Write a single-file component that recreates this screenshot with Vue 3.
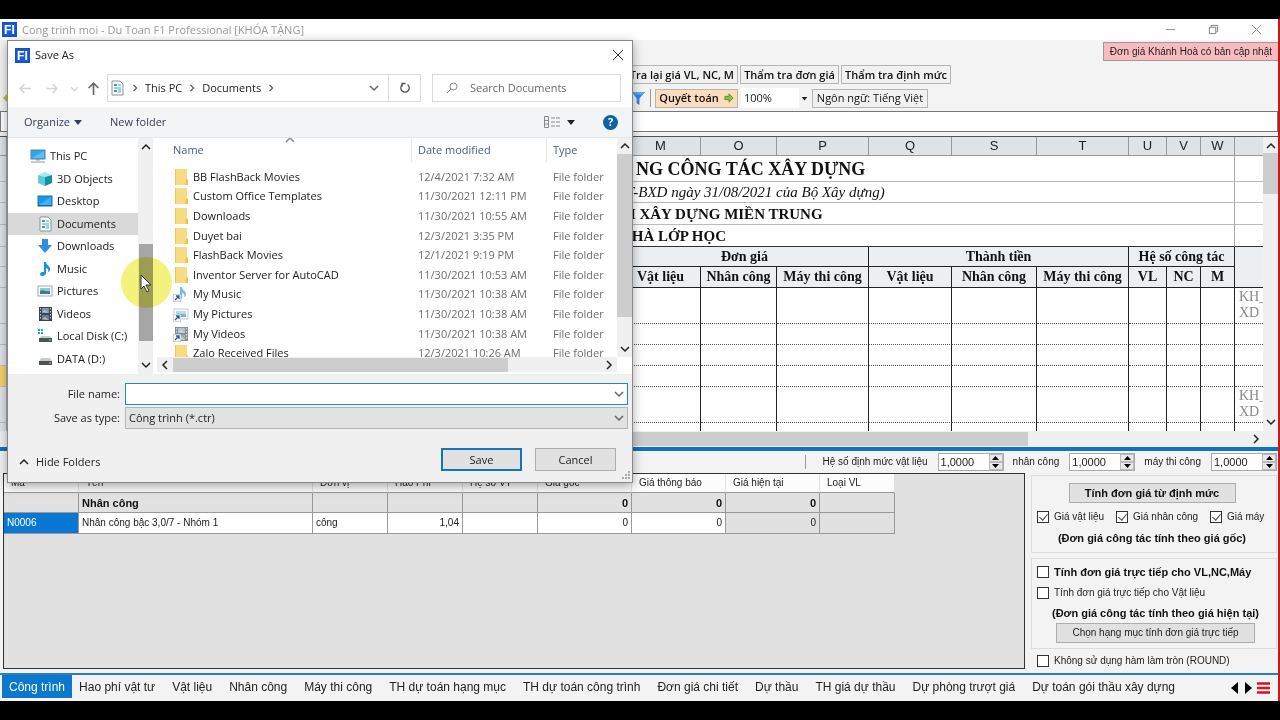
<script setup>
import { ref } from 'vue'

const fileName = ref('')
const zoomLevel = ref('100%')

const columns = ['', 'M', 'O', 'P', 'Q', 'S', 'T', 'U', 'V', 'W', '']
const headings = [
  { text: 'NG CÔNG TÁC XÂY DỰNG', kind: 'title' },
  { text: 'T-BXD ngày 31/08/2021 của Bộ Xây dựng)', kind: 'note' },
  { text: 'H XÂY DỰNG MIỀN TRUNG', kind: 'unit' },
  { text: 'NHÀ LỚP HỌC', kind: 'work' }
]
const subHeads = ['Vật liệu', 'Nhân công', 'Máy thi công', 'Vật liệu', 'Nhân công', 'Máy thi công', 'VL', 'NC', 'M']
const bodyRows = [
  { size: 'tall', code: 'KH_ XD' },
  { size: 'mid', code: '' },
  { size: 'mid', code: '' },
  { size: 'mid', code: '', active: true },
  { size: 'tall', code: 'KH_ XD' },
  { size: 'cut', code: '' }
]

const tree = [
  { name: 'This PC', icon: 'pc', root: true },
  { name: '3D Objects', icon: 'cube' },
  { name: 'Desktop', icon: 'desktop' },
  { name: 'Documents', icon: 'doc', selected: true },
  { name: 'Downloads', icon: 'down' },
  { name: 'Music', icon: 'music' },
  { name: 'Pictures', icon: 'picture' },
  { name: 'Videos', icon: 'video' },
  { name: 'Local Disk (C:)', icon: 'sysdisk' },
  { name: 'DATA (D:)', icon: 'disk' }
]
const files = [
  { name: 'BB FlashBack Movies', date: '12/4/2021 7:32 AM', icon: 'folder' },
  { name: 'Custom Office Templates', date: '11/30/2021 12:11 PM', icon: 'folder' },
  { name: 'Downloads', date: '11/30/2021 10:55 AM', icon: 'folder' },
  { name: 'Duyet bai', date: '12/3/2021 3:35 PM', icon: 'folder' },
  { name: 'FlashBack Movies', date: '12/1/2021 9:19 PM', icon: 'folder' },
  { name: 'Inventor Server for AutoCAD', date: '11/30/2021 10:53 AM', icon: 'folder' },
  { name: 'My Music', date: '11/30/2021 10:38 AM', icon: 'music', link: true },
  { name: 'My Pictures', date: '11/30/2021 10:38 AM', icon: 'picture', link: true },
  { name: 'My Videos', date: '11/30/2021 10:38 AM', icon: 'video', link: true },
  { name: 'Zalo Received Files', date: '12/3/2021 10:26 AM', icon: 'folder' }
]

const factors = [
  { id: 'f-vl', label: 'Hệ số định mức vật liệu' },
  { id: 'f-nc', label: 'nhân công' },
  { id: 'f-m', label: 'máy thi công' }
]
const costHeads = ['Mã', 'Tên', 'Đơn vị', 'Hao Phí', 'Hệ số VT', 'Giá gốc', 'Giá thông báo', 'Giá hiện tại', 'Loại VL']
const tabs = ['Công trình', 'Hao phí vật tư', 'Vật liệu', 'Nhân công', 'Máy thi công', 'TH dự toán hạng mục', 'TH dự toán công trình', 'Đơn giá chi tiết', 'Dự thầu', 'TH giá dự thầu', 'Dự phòng trượt giá', 'Dự toán gói thầu xây dựng']
</script>

<template>
  <div class="screen">
    <svg class="defs" width="0" height="0" aria-hidden="true">
      <defs>
        <symbol id="logo" viewBox="0 0 16 16"><rect width="16" height="16" fill="#1a5fe0" /><rect x="1" y="1" width="14" height="14" fill="none" stroke="#0d48b8" stroke-width="1" /><text x="8" y="13" font-size="13" font-weight="700" font-family="Liberation Sans, sans-serif" fill="#fff" text-anchor="middle">FI</text></symbol>
        <symbol id="pc" viewBox="0 0 16 16"><rect x="1" y="2" width="14" height="9" fill="#31a5ea" stroke="#4c86ad" /><path d="M2 10L14 3v7z" fill="#5cc0f5" /><path d="M6 11h4v1.500H6z" fill="#8fa6b5" /><path d="M1 14h14" stroke="#8a9aa6" /></symbol>
        <symbol id="cube" viewBox="0 0 16 16"><path d="M1 4L8 1l7 3-7 2z" fill="#a5e9ee" /><path d="M1 4l7 2v9l-7-3z" fill="#5fcbd8" /><path d="M8 6l7-2v8l-7 3z" fill="#168fa6" /></symbol>
        <symbol id="desktop" viewBox="0 0 16 16"><rect x="1" y="3" width="14" height="10" fill="#159bea" stroke="#2a6ea3" /><path d="M2 12L14 4v8z" fill="#3db2f4" /><path d="M1 12.500h14" stroke="#1b628f" /></symbol>
        <symbol id="doc" viewBox="0 0 16 16"><path d="M3 1h8l3 3v11H3z" fill="#f6fafb" stroke="#8b9499" /><path d="M5 4h3v2H5zM5 10h3v2H5z" fill="#3c9db0" /><path d="M9 5h3M5 8h7M9 10h3M9 12h3" stroke="#50aabb" /></symbol>
        <symbol id="down" viewBox="0 0 16 16"><path d="M5 1h6v6h4l-7 8-7-8h4z" fill="#2e8fdc" /></symbol>
        <symbol id="music" viewBox="0 0 16 16"><path d="M7 1h2c0 3 4 4 4 7 0 2-1 3-2 3 1-3-1-4-2-4v5c0 2-2 3-4 3s-3-3 0-4h2z" fill="#1b93d3" /></symbol>
        <symbol id="picture" viewBox="0 0 16 16"><rect x="1" y="3" width="14" height="10" fill="#fff" stroke="#9daab2" /><rect x="3" y="5" width="10" height="6" fill="#8cc7e6" /><path d="M3 8c3-2 5 1 10 0v3H3z" fill="#3f7b80" /></symbol>
        <symbol id="video" viewBox="0 0 16 16"><rect x="2" y="1" width="13" height="14" fill="#3f4347" /><path d="M3.500 2v12M13.500 2v12" stroke="#c5c8ca" stroke-dasharray="1.500 1.500" /><rect x="5" y="2" width="7" height="5" fill="#6d9bd0" /><rect x="5" y="9" width="7" height="5" fill="#587ebb" /><path d="M5 6l3-2 4 3zM5 13l3-2 4 3z" fill="#d2bd70" /></symbol>
        <symbol id="sysdisk" viewBox="0 0 16 16"><path d="M1 1h2v2H1zM4 1h2v2H4zM1 4h2v2H1zM4 4h2v2H4z" fill="#19a7df" /><path d="M4 8h9l2 3H2z" fill="#c9cccd" /><rect x="2" y="10" width="13" height="4" fill="#4c5356" /><path d="M12 12h2" stroke="#84e58b" /></symbol>
        <symbol id="disk" viewBox="0 0 16 16"><path d="M4 7h9l2 3H2z" fill="#c9cccd" /><rect x="2" y="10" width="13" height="4" fill="#4c5356" /><path d="M12 12h2" stroke="#c5cbc6" /></symbol>
        <symbol id="folder" viewBox="0 0 16 16"><path d="M2 0h12v10l1 1v5H2z" fill="#f8dc84" /><path d="M2 0h1v16H2z" fill="#eec75c" /><path d="M13 10l2 1v5h-3z" fill="#eec351" /></symbol>
        <symbol id="chev-down" viewBox="0 0 10 10"><path d="M1 3l4 4 4-4" fill="none" stroke="currentColor" stroke-width="1.500" /></symbol>
        <symbol id="chev-up" viewBox="0 0 10 10"><path d="M1 7l4-4 4 4" fill="none" stroke="currentColor" stroke-width="1.500" /></symbol>
        <symbol id="chev-left" viewBox="0 0 10 10"><path d="M7 1L3 5l4 4" fill="none" stroke="currentColor" stroke-width="1.500" /></symbol>
        <symbol id="chev-right" viewBox="0 0 10 10"><path d="M3 1l4 4-4 4" fill="none" stroke="currentColor" stroke-width="1.500" /></symbol>
        <symbol id="tri" viewBox="0 0 10 10"><path d="M1 3h8L5 8z" fill="currentColor" /></symbol>
      </defs>
    </svg>

    <div class="app">
      <header class="titlebar">
        <svg class="logo"><use href="#logo" /></svg>
        <span class="app-name">Cong trinh moi - Du Toan F1 Professional [KHÓA TẶNG]</span>
        <div class="win-buttons">
          <button aria-label="Minimize"><svg viewBox="0 0 12 12"><path d="M1 6h10" stroke="#8a8a8a" /></svg></button>
          <button aria-label="Restore"><svg viewBox="0 0 12 12"><path d="M1.500 3.500h7v7h-7zM3.500 3V1.500h7v7H9" fill="none" stroke="#777" /></svg></button>
          <button aria-label="Close"><svg viewBox="0 0 12 12"><path d="M1 1l10 10M11 1L1 11" stroke="#8a8a8a" /></svg></button>
        </div>
      </header>

      <section class="tools">
        <div class="alert-row"><a class="alert" href="#">Đơn giá Khánh Hoà có bản cập nhật</a></div>
        <div class="tool-row">
          <button class="tool bold under">Tra lại giá VL, NC, M</button>
          <button class="tool bold w99">Thẩm tra đơn giá</button>
          <button class="tool bold w110">Thẩm tra định mức</button>
        </div>
        <div class="tool-row second">
          <svg class="back-mark" viewBox="0 0 6 12"><path d="M6 1L1 6l5 5z" fill="#b9c52f" /></svg>
          <svg class="filter" viewBox="0 0 16 16"><path d="M1 1h14L9 8v7l-3-2V8z" fill="#2f86e6" /><path d="M1 1h14l-3 3H5z" fill="#62a9f2" /></svg>
          <span class="sep"></span>
          <button class="tool bold warm">Quyết toán <svg viewBox="0 0 12 12"><path d="M1 4h5V1l5 5-5 5V8H1z" fill="#86c440" stroke="#4f8c24" /></svg></button>
          <div class="zoom">
            <select v-model="zoomLevel" aria-label="Zoom"><option>100%</option></select>
            <svg class="tiny"><use href="#tri" /></svg>
          </div>
          <button class="tool w116">Ngôn ngữ: Tiếng Việt</button>
        </div>
      </section>
      <input class="formula" type="text" aria-label="Formula" />

      <section class="sheet-wrap">
        <div class="sheet">
          <table>
            <colgroup>
              <col class="c-num" /><col class="c-left" /><col class="c-m" /><col class="c-o" /><col class="c-p" /><col class="c-q" />
              <col class="c-s" /><col class="c-p" /><col class="c-u" /><col class="c-v" /><col class="c-w" /><col />
            </colgroup>
            <thead>
              <tr class="letters"><th></th><th v-for="(c, i) in columns" :key="i">{{ c }}</th></tr>
            </thead>
            <tbody>
              <tr v-for="h in headings" :key="h.kind" class="heading" :class="h.kind">
                <th></th><td></td><td colspan="9">{{ h.text }}</td><td></td>
              </tr>
              <tr class="group"><th></th><td></td><td colspan="3">Đơn giá</td><td colspan="3">Thành tiền</td><td colspan="3">Hệ số công tác</td><td rowspan="2"></td></tr>
              <tr class="group sub"><th></th><td></td><td v-for="(s, i) in subHeads" :key="i">{{ s }}</td></tr>
              <tr v-for="(r, i) in bodyRows" :key="i" class="line" :class="r.size">
                <th :class="{ active: r.active }"></th><td v-for="n in 10" :key="n"></td><td class="code">{{ r.code }}</td>
              </tr>
            </tbody>
          </table>
        </div>
        <div class="vbar">
          <svg class="tiny"><use href="#chev-up" /></svg>
          <span class="thumb"></span>
          <svg class="tiny end"><use href="#chev-down" /></svg>
        </div>
      </section>
      <div class="hbar">
        <svg class="tiny"><use href="#chev-left" /></svg><span class="thumb"></span><svg class="tiny end"><use href="#chev-right" /></svg>
      </div>

      <div class="factors">
        <span class="sep"></span>
        <div v-for="f in factors" :key="f.id" class="factor">
          <label :for="f.id">{{ f.label }}</label>
          <div class="spin">
            <input :id="f.id" type="text" value="1,0000" />
            <div class="steps">
              <button aria-label="Increase"><svg viewBox="0 0 7 4"><path d="M0 4h7L3.500 0z" /></svg></button>
              <button aria-label="Decrease"><svg viewBox="0 0 7 4"><path d="M0 0h7L3.500 4z" /></svg></button>
            </div>
          </div>
        </div>
      </div>

      <section class="lower">
        <div class="costs">
          <table>
            <colgroup><col class="k-75" /><col class="k-name" /><col class="k-75" /><col class="k-75" /><col class="k-75" /><col class="k-94" /><col class="k-94" /><col class="k-94" /><col class="k-75" /></colgroup>
            <thead><tr><th v-for="h in costHeads" :key="h">{{ h }}</th></tr></thead>
            <tbody>
              <tr class="total"><td></td><td>Nhân công</td><td></td><td></td><td></td><td class="num">0</td><td class="num">0</td><td class="num">0</td><td></td></tr>
              <tr><td class="picked">N0006</td><td>Nhân công bậc 3,0/7 - Nhóm 1</td><td>công</td><td class="num">1,04</td><td></td><td class="num">0</td><td class="num">0</td><td class="num dim">0</td><td class="dim"></td></tr>
            </tbody>
          </table>
        </div>
        <aside class="side">
          <div class="box first">
            <button class="push strong">Tính đơn giá từ định mức</button>
            <div class="checks">
              <label><input type="checkbox" checked /> Giá vật liệu</label>
              <label><input type="checkbox" checked /> Giá nhân công</label>
              <label><input type="checkbox" checked /> Giá máy</label>
            </div>
            <p>(Đơn giá công tác tính theo giá gốc)</p>
          </div>
          <div class="box direct">
            <label class="strong"><input type="checkbox" /> Tính đơn giá trực tiếp cho VL,NC,Máy</label>
            <label><input type="checkbox" /> Tính đơn giá trực tiếp cho Vật liệu</label>
            <p>(Đơn giá công tác tính theo giá hiện tại)</p>
            <button class="push wide">Chọn hạng mục tính đơn giá trực tiếp</button>
          </div>
          <label class="round"><input type="checkbox" /> Không sử dụng hàm làm tròn (ROUND)</label>
        </aside>
      </section>

      <nav class="tabs">
        <button v-for="(t, i) in tabs" :key="t" :class="{ on: i === 0 }">{{ t }}</button>
        <div class="tab-tools">
          <button aria-label="Previous"><svg viewBox="0 0 8 12"><path d="M7 0v12L0 6z" /></svg></button>
          <button aria-label="Next"><svg viewBox="0 0 8 12"><path d="M1 0v12l7-6z" /></svg></button>
          <button aria-label="Menu"><svg class="menu" viewBox="0 0 13 12"><path d="M0 1.500h13M0 6h13M0 10.500h13" stroke="#d2161b" stroke-width="2.500" /></svg></button>
        </div>
      </nav>
    </div>

    <div class="dialog" role="dialog" aria-label="Save As">
      <div class="d-title">
        <svg class="logo"><use href="#logo" /></svg><span>Save As</span>
        <button aria-label="Close"><svg viewBox="0 0 12 12"><path d="M1 1l10 10M11 1L1 11" stroke="#333" /></svg></button>
      </div>
      <div class="d-nav">
        <div class="arrows">
          <button aria-label="Back"><svg viewBox="0 0 12 12"><path d="M11 6H1M5 2L1 6l4 4" fill="none" stroke="#d5d5d5" stroke-width="1.500" /></svg></button>
          <button aria-label="Forward"><svg viewBox="0 0 12 12"><path d="M1 6h10M7 2l4 4-4 4" fill="none" stroke="#d5d5d5" stroke-width="1.500" /></svg></button>
          <button class="pale" aria-label="Recent"><svg viewBox="0 0 12 12"><path d="M3 5l3 3 3-3" fill="none" stroke="#ccc" /></svg></button>
          <button aria-label="Up"><svg viewBox="0 0 12 12"><path d="M6 12V1M1.500 5.500L6 1l4.500 4.500" fill="none" stroke="#666" stroke-width="1.500" /></svg></button>
        </div>
        <div class="address">
          <svg class="i16"><use href="#doc" /></svg>
          <svg class="tiny"><use href="#chev-right" /></svg><span>This PC</span>
          <svg class="tiny"><use href="#chev-right" /></svg><span>Documents</span>
          <svg class="tiny"><use href="#chev-right" /></svg>
          <button class="more" aria-label="Previous locations"><svg class="tiny"><use href="#chev-down" /></svg></button>
          <button class="refresh" aria-label="Refresh"><svg viewBox="0 0 12 12"><path d="M8.500 2.500a4.200 4.200 0 1 1-5 0" fill="none" stroke="#555" stroke-width="1.300" /><path d="M3 .800v4M2.500 1.500h4" fill="none" stroke="#555" stroke-width="1.300" /></svg></button>
        </div>
        <div class="search">
          <svg viewBox="0 0 12 12"><circle cx="7.500" cy="4.500" r="3.500" fill="none" stroke="#888" /><path d="M5 7L1 11" stroke="#888" /></svg>
          <input type="text" placeholder="Search Documents" aria-label="Search Documents" />
        </div>
      </div>
      <div class="d-tools">
        <button>Organize <svg class="tiny"><use href="#tri" /></svg></button>
        <button>New folder</button>
        <button class="view" aria-label="Change your view">
          <svg class="view-icon" viewBox="0 0 16 12"><path d="M.500.500h4v11h-4zM.500 4.500h4M.500 8h4" fill="none" stroke="#888" /><path d="M7 2h4M12 2h4M7 6h4M12 6h4M7 10h4M12 10h4" stroke="#888" /></svg>
          <svg class="tiny"><use href="#tri" /></svg>
        </button>
        <button class="help" aria-label="Help">?</button>
      </div>
      <div class="d-body">
        <ul class="tree">
          <li v-for="t in tree" :key="t.name" :class="{ root: t.root, selected: t.selected }"><svg class="i16"><use :href="'#' + t.icon" /></svg>{{ t.name }}</li>
        </ul>
        <div class="tree-bar">
          <svg class="tiny"><use href="#chev-up" /></svg><span class="thumb"></span><svg class="tiny end"><use href="#chev-down" /></svg>
        </div>
        <div class="list">
          <div class="list-main">
            <div class="list-view">
              <table>
                <colgroup><col class="l-name" /><col class="l-date" /><col /></colgroup>
                <thead><tr><th>Name <svg class="sort"><use href="#chev-up" /></svg></th><th>Date modified</th><th>Type</th></tr></thead>
              </table>
              <div class="rows">
                <div v-for="f in files" :key="f.name" class="file">
                  <span class="f-name">
                    <span class="f-icon"><svg class="i16" :class="{ faint: f.link }"><use :href="'#' + f.icon" /></svg>
                      <svg v-if="f.link" class="link" viewBox="0 0 8 8"><rect width="8" height="8" fill="#fff" stroke="#aaa" /><path d="M2 6l4-4M3 2h3v3" fill="none" stroke="#1c5fae" stroke-width="1.300" /></svg></span>{{ f.name }}</span>
                  <span>{{ f.date }}</span><span>File folder</span>
                </div>
              </div>
            </div>
            <div class="list-bar"><svg class="tiny"><use href="#chev-up" /></svg><span class="thumb"></span><svg class="tiny end"><use href="#chev-down" /></svg></div>
          </div>
          <div class="list-hbar"><svg class="tiny"><use href="#chev-left" /></svg><span class="thumb"></span><svg class="tiny end"><use href="#chev-right" /></svg></div>
        </div>
      </div>
      <div class="d-form">
        <label for="fname">File name:</label>
        <div class="field"><input id="fname" v-model="fileName" type="text" /><svg class="tiny"><use href="#chev-down" /></svg></div>
        <label for="ftype">Save as type:</label>
        <div class="field"><select id="ftype"><option>Công trình (*.ctr)</option></select><svg class="tiny"><use href="#chev-down" /></svg></div>
      </div>
      <div class="d-foot">
        <button class="hide"><svg class="tiny"><use href="#chev-up" /></svg>Hide Folders</button>
        <button class="act primary">Save</button>
        <button class="act">Cancel</button>
      </div>
      <svg class="grip" viewBox="0 0 9 9"><path d="M7 1h2M4 4h2M7 4h2M1 7h2M4 7h2M7 7h2" stroke="#aaa" stroke-width="2" /></svg>
      <span class="spot"></span>
      <svg class="pointer" viewBox="0 0 12 19"><path d="M1 1v14l3-3 3 6 2-1-3-6h5z" fill="#fff" stroke="#333" /></svg>
    </div>
  </div>
</template>

<style>
body { background: #000; }
</style>

<style scoped>
* { box-sizing: border-box; }
button { border: 0; background: none; padding: 0; font: inherit; color: inherit; }
input, select { font: inherit; color: inherit; border-radius: 0; }
p, ul { margin: 0; padding: 0; list-style: none; }
svg { flex: none; display: block; }
table { border-collapse: separate; border-spacing: 0; table-layout: fixed; width: 100%; }
.defs { position: absolute; }
.tiny { width: 10px; height: 10px; }
.i16 { width: 16px; height: 16px; }
.logo { width: 15px; height: 15px; }

.screen { position: relative; min-height: 100vh; padding: 19px 0; background: #000; display: flex; flex-direction: column; overflow: hidden; }
.app { flex: 1; display: flex; flex-direction: column; background: #f3f3f3; border-right: 2px solid #c9181c; font: 10px/14px "Liberation Sans", Arial, sans-serif; color: #222; }

.titlebar { height: 21px; display: flex; align-items: center; padding-left: 2px; background: #fff; font: 11px/16px "Open Sans", sans-serif; color: #999; }
.app-name { margin-left: 5px; }
.win-buttons { margin-left: auto; display: flex; gap: 32px; padding-right: 16px; }
.win-buttons svg { width: 11px; height: 11px; }

.tools { height: 71px; }
.alert-row { display: flex; justify-content: flex-end; padding-top: 2px; }
.alert { height: 19px; padding: 0 6px; border: 1px solid #999; border-right: 0; background: #f9bcbe; line-height: 17px; color: #222; text-decoration: none; }
.tool-row { display: flex; align-items: center; gap: 2px; padding: 4px 0 0 624px; font: 11px/14px "Open Sans", sans-serif; }
.tool { height: 19px; padding: 0 3px; border: 1px solid #b5b5b5; background: #f1f1f1; color: #111; display: flex; align-items: center; justify-content: center; gap: 5px; white-space: nowrap; }
.tool svg { width: 10px; height: 10px; }
.bold { font-weight: 600; }
.under { width: 114px; justify-content: flex-end; }
.w99 { min-width: 99px; }
.w110 { min-width: 110px; }
.w116 { min-width: 116px; }
.second { position: relative; padding-top: 4px; padding-left: 631px; }
.warm { min-width: 83px; background: #fbdcbd; }
.filter { width: 15px; height: 15px; }
.back-mark { position: absolute; left: 2px; top: 8px; width: 6px; height: 12px; }
.sep { width: 1px; height: 18px; background: #999; margin: 0 2px; }
.zoom { display: flex; align-items: center; width: 68px; height: 20px; margin: 0 1px; position: relative; }
.zoom select { appearance: none; width: 58px; height: 20px; border: 0; background: #fff; padding: 0 3px; }
.zoom svg { width: 7px; height: 7px; position: absolute; right: 1px; }
.formula { width: 100%; height: 21px; border: 1px solid #777; background: #fff; margin-bottom: 4px; display: block; }

.sheet-wrap { display: flex; border-top: 1px solid #555; height: 295px; }
.sheet { flex: 1; min-width: 0; overflow: hidden; background: #fff; }
.c-num { width: 7px; } .c-left { width: 614px; } .c-m { width: 80px; } .c-o { width: 76px; } .c-p { width: 92px; }
.c-q { width: 83px; } .c-s { width: 85px; } .c-u { width: 38px; } .c-v { width: 34px; } .c-w { width: 34px; }
.sheet th, .sheet td { padding: 0; overflow: hidden; white-space: nowrap; border-right: 1px solid #aaa; border-bottom: 1px solid #bbb; }
.sheet th { background: #dfe3e6; font-weight: 400; }
.sheet tr > :last-child { border-right: 0; }
.letters th { height: 19px; font-size: 13px; line-height: 18px; border-color: #999; }
.heading td { height: 22px; font-family: "Liberation Serif", "Times New Roman", serif; color: #111; }
.heading.title td { height: 26px; font-size: 18px; line-height: 22px; font-weight: 700; padding-left: 15px; }
.heading.note td { height: 21px; font-size: 15px; line-height: 18px; font-style: italic; padding-left: 5px; }
.heading.unit td { font-size: 15px; line-height: 18px; font-weight: 700; padding-left: 3px; }
.heading.work td { font-size: 15px; line-height: 18px; font-weight: 700; border-bottom-color: #333; }
.group td { height: 20px; background: #eceff2; text-align: center; font: 700 14px/18px "Liberation Serif", "Times New Roman", serif; border-color: #222; color: #111; }
.sheet .sub td { height: 21px; border-right: 1px solid #222; line-height: 20px; }
.line td { height: 21px; border-right-color: #222; border-bottom: 1px dotted #555; }
.line.tall td { height: 36px; }
.line.cut td { height: 9px; border-bottom: 0; }
.sheet .line .code { font: 14px/16px "Liberation Serif", serif; color: #8a8a8a; white-space: normal; vertical-align: top; padding: 1px 0 0 4px; }
.sheet .active { background: #f3d36b; }
.vbar { width: 15px; background: #f0f0f0; display: flex; flex-direction: column; align-items: center; padding: 4px 0; }
.vbar .thumb { width: 100%; height: 41px; background: #cdcdcd; margin-top: 2px; }
.end { margin-top: auto; }
.hbar { height: 16px; background: #f0f0f0; display: flex; align-items: center; padding: 0 17px 0 5px; }
.hbar .thumb { width: 1010px; height: 14px; background: #cdcdcd; margin-left: 3px; }
.hbar .end { margin: 0 0 0 auto; }

.factors { border-top: 4px solid #0e73c4; height: 26px; display: flex; align-items: center; justify-content: flex-end; padding-right: 1px; gap: 9px; }
.factors > .sep { height: 14px; margin-right: 8px; }
.factor { display: flex; align-items: center; gap: 10px; }
.spin { display: flex; width: 66px; height: 18px; border: 1px solid #aaa; background: #fff; }
.spin input { width: 50px; border: 0; padding: 0 2px; background: none; font-size: 11px; }
.steps { width: 14px; display: flex; flex-direction: column; }
.steps button { flex: 1; background: #e9e9e9; border: 1px solid #bbb; display: flex; align-items: center; justify-content: center; }
.steps svg { width: 7px; height: 4px; }

.lower { flex: 1; display: flex; padding: 0 1px 4px 3px; gap: 6px; }
.costs { flex: 1; min-width: 0; border: 1px solid #333; background: #e1e1e1; }
.costs table { width: 891px; }
.k-75 { width: 75px; } .k-name { width: 234px; } .k-94 { width: 94px; }
.costs th { height: 19px; padding: 0 7px; background: #fcfcfc; text-align: left; font-weight: 400; line-height: 14px; border-right: 1px solid #e0e0e0; border-bottom: 1px solid #999; white-space: nowrap; }
.costs td { height: 21px; padding: 0 3px; background: #fff; border-right: 1px solid #999; border-bottom: 1px solid #999; white-space: nowrap; line-height: 14px; }
.costs .total td { height: 20px; background: #e1e1e1; font-size: 11px; font-weight: 700; color: #111; }
.costs .num { text-align: right; }
.costs .dim { background: #e1e1e1; }
.costs .picked { background: #0a78d2; color: #fff; }

.side { width: 246px; padding-top: 2px; }
.side .box { border: 1px solid #dcdcdc; display: flex; flex-direction: column; }
.side p { text-align: center; font-size: 11px; font-weight: 700; color: #111; }
.side label { display: flex; align-items: center; gap: 5px; white-space: nowrap; }
.side input { appearance: none; flex: none; width: 12px; height: 12px; margin: 0; border: 1px solid #333; background: #fff; position: relative; }
.side input:checked::after { content: ""; position: absolute; left: 3px; top: 0; width: 4px; height: 7px; border: solid #444; border-width: 0 1px 1px 0; transform: rotate(40deg); }
.strong { font-size: 11px; font-weight: 700; color: #111; }
.push { height: 20px; border: 1px solid #adadad; background: #e1e1e1; align-self: center; white-space: nowrap; }
.first { height: 78px; padding: 7px 9px 0 5px; gap: 7px; }
.first .push { width: 167px; }
.checks { display: flex; gap: 12px; }
.direct { height: 91px; margin-top: 5px; padding: 5px 2px 0 5px; gap: 5px; }
.direct .push { width: 199px; margin-top: -2px; }
.round { padding: 5px 0 0 6px; }
.direct label { min-height: 16px; }

.tabs { border-top: 2px solid #2a7fc0; height: 28px; display: flex; align-items: center; padding-left: 2px; font-size: 12px; }
.tabs > button { height: 23px; padding: 0 7px; margin-right: 3px; align-self: flex-start; white-space: nowrap; }
.tabs > .on { background: #0a78cc; color: #fff; margin-right: 0; }
.tab-tools { margin-left: auto; display: flex; gap: 5px; padding-right: 8px; }
.tab-tools svg { width: 8px; height: 12px; }
.tab-tools .menu { width: 13px; }

.dialog { position: absolute; left: 7px; top: 40px; width: 626px; border: 1px solid #888; background: #fff; box-shadow: 0 3px 10px rgba(0, 0, 0, .35); font: 11px/16px "Open Sans", sans-serif; color: #222; }
.d-title { height: 28px; display: flex; align-items: center; padding: 0 8px 0 7px; gap: 5px; }
.d-title button { margin-left: auto; }
.d-title button svg { width: 12px; height: 12px; }
.d-nav { height: 38px; display: flex; align-items: center; padding: 0 11px; }
.arrows { display: flex; flex: none; width: 88px; gap: 13px; }
.arrows svg { width: 13px; height: 13px; }
.arrows button { width: 13px; }
.pale { margin-left: -3px; margin-right: -7px; }
.address { flex: none; width: 314px; height: 28px; border: 1px solid #d9d9d9; display: flex; align-items: center; padding-left: 1px; }
.address > .tiny { margin: 0 6px; color: #555; width: 8px; height: 8px; }
.more { margin-left: auto; width: 30px; height: 26px; display: grid; place-items: center; border-right: 1px solid #d9d9d9; color: #666; }
.refresh { width: 31px; height: 26px; display: grid; place-items: center; }
.refresh svg { width: 12px; height: 12px; }
.search { flex: 1; min-width: 0; height: 28px; margin-left: 11px; border: 1px solid #d9d9d9; display: flex; align-items: center; padding-left: 13px; gap: 12px; }
.search svg { width: 12px; height: 12px; }
.search input { flex: 1; min-width: 0; border: 0; padding: 0; color: #666; }
.search input::placeholder { color: #6b6b6b; opacity: 1; }
.d-tools { height: 31px; background: #f3f4f5; border-bottom: 1px solid #e6e6e6; display: flex; align-items: center; padding: 0 14px 0 16px; color: #33425a; }
.d-tools button { display: flex; align-items: center; gap: 3px; margin-right: 27px; }
.d-tools .view { margin-left: auto; gap: 6px; color: #222; }
.view-icon { width: 16px; height: 12px; }
.d-tools .help { width: 15px; height: 15px; margin: 0; border-radius: 50%; background: #0f62a8; color: #fff; font-weight: 700; justify-content: center; }
.d-body { height: 236px; display: flex; }
.tree { width: 130px; height: 225px; margin-top: 7px; display: grid; grid-template-rows: repeat(10, 1fr); }
.tree li { display: flex; align-items: center; gap: 4px; padding-left: 29px; white-space: nowrap; }
.tree .root { padding-left: 22px; }
.tree .selected { background: #d9d9d9; }
.tree-bar { width: 15px; display: flex; flex-direction: column; align-items: center; background: #f0f0f0; padding: 4px 0; }
.tree-bar .thumb { width: 14px; height: 97px; margin-top: 92px; background: #a6a6a6; }
.list { flex: 1; min-width: 0; margin-left: 4px; display: flex; flex-direction: column; }
.list-main { height: 219px; display: flex; overflow: hidden; }
.list-view { flex: 1; min-width: 0; }
.l-name { width: 255px; } .l-date { width: 135px; }
.list th { height: 24px; padding: 0 0 0 6px; text-align: left; font-weight: 400; color: #4c607a; border-right: 1px solid #e5e5e5; position: relative; }
.list th:first-child { padding-left: 16px; }
.list th:last-child { border-right: 0; }
.sort { position: absolute; left: 128px; top: -3px; width: 10px; height: 10px; color: #888; }
.rows { height: 196px; margin-top: 5px; display: grid; grid-template-rows: repeat(10, 1fr); }
.file { display: grid; grid-template-columns: 261px 135px 1fr; align-items: center; color: #6d6d6d; white-space: nowrap; }
.f-name { display: flex; align-items: center; gap: 4px; padding-left: 16px; color: #222; }
.f-icon { position: relative; }
.faint { opacity: .6; }
.link { position: absolute; left: 0; bottom: 0; width: 8px; height: 8px; }
.list-bar { width: 15px; display: flex; flex-direction: column; align-items: center; background: #f0f0f0; padding: 3px 0; }
.list-bar .thumb { width: 100%; height: 163px; background: #cdcdcd; margin-top: 3px; }
.list-hbar { height: 15px; margin-right: 15px; display: flex; align-items: center; background: #f0f0f0; padding: 0 3px; }
.list-hbar .thumb { width: 335px; height: 14px; background: #cdcdcd; margin-left: 3px; }
.list-hbar .end { margin: 0 0 0 auto; }
.d-form { background: #f0f0f0; padding: 9px 4px 0 0; display: grid; grid-template-columns: 112px 1fr; column-gap: 5px; row-gap: 2px; align-items: center; }
.d-form label { text-align: right; }
.field { position: relative; height: 22px; }
.field input, .field select { appearance: none; width: 100%; height: 22px; padding: 0 3px; border: 1px solid #2a8aa0; background: #fff; display: block; }
.field select { border-color: #b5b5b5; background: #e2e2e2; }
.field svg { position: absolute; right: 4px; top: 6px; color: #666; }
.d-foot { background: #f0f0f0; height: 53px; display: flex; align-items: center; padding: 8px 16px 0 11px; }
.hide { display: flex; align-items: center; gap: 7px; margin-right: auto; padding-top: 5px; }
.act { width: 81px; height: 23px; border: 1px solid #adadad; background: #e1e1e1; }
.act + .act { margin-left: 13px; }
.primary { border: 2px solid #1674b8; }
.grip { position: absolute; right: 2px; bottom: 2px; width: 9px; height: 9px; }
.spot { position: absolute; left: 113px; top: 216px; width: 51px; height: 51px; border-radius: 50%; background: #f2f27c; mix-blend-mode: multiply; }
.pointer { position: absolute; left: 132px; top: 233px; width: 12px; height: 19px; }
</style>
